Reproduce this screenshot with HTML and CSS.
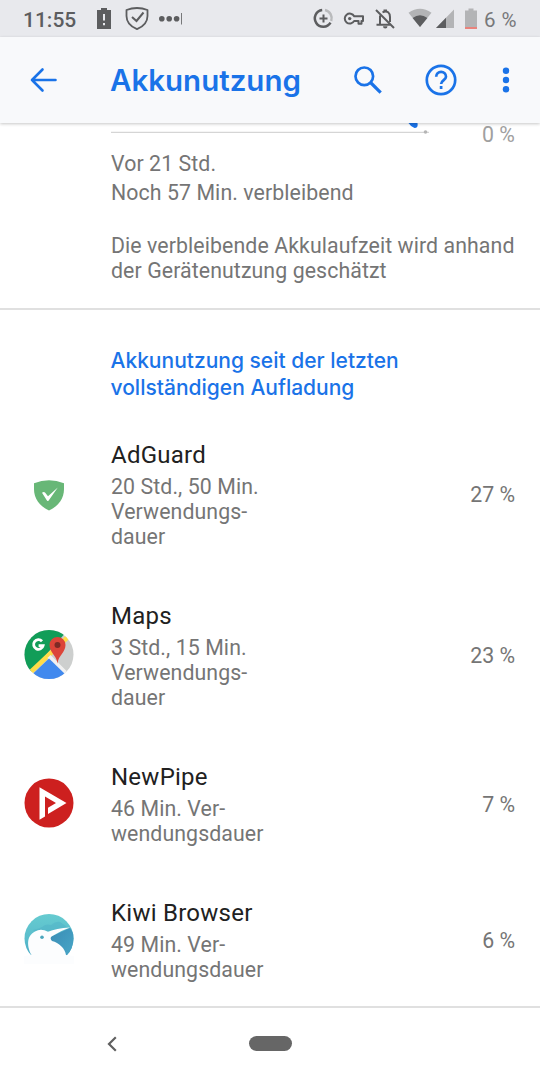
FILE: index.html
```html
<!DOCTYPE html>
<html lang="de">
<head>
  <meta charset="UTF-8">
  <meta name="viewport" content="width=device-width, initial-scale=1.0">
  <title>Akkunutzung</title>
  <link rel="stylesheet" href="styles.css">
</head>
<body>
  <div class="screen">
    <div class="statusbar">
      <span class="clock">11:55</span>
      <svg class="status-left" width="90" height="37" viewBox="94 0 90 37">
        <path fill="#5c5d5f" d="M97 10h4V8h6v2h4v19H97z"/>
        <path stroke="#e8e9ed" stroke-width="2" d="M104 14v6.5M104 23v2.2"/>
        <path fill="none" stroke="#5c5d5f" stroke-width="1.8" stroke-linejoin="round" d="M137 8c4 0 7 .6 10.500 2v6c0 6-4 10.500-10.500 13.200C130.500 26.500 126.500 22 126.500 16v-6c3.500-1.400 6.500-2 10.500-2z"/>
        <path fill="none" stroke="#5c5d5f" stroke-width="2" d="M132 17l4.500 4 7-8.500"/>
        <circle cx="161.800" cy="18.700" r="2.800" fill="#5c5d5f"/>
        <circle cx="169.200" cy="18.700" r="2.800" fill="#5c5d5f"/>
        <circle cx="176.600" cy="18.700" r="2.800" fill="#5c5d5f"/>
        <path stroke="#77787a" d="M181.500 13v11.500"/>
      </svg>
      <svg class="status-right" width="170" height="37" viewBox="311 0 170 37">
        <path fill="none" stroke="#5c5d5f" stroke-width="2.500" d="M322.200 10a8.400 8.400 0 1 0 8.300 12.600"/>
        <path fill="none" stroke="#b9babc" stroke-width="2.500" d="M325 10a8.400 8.400 0 0 1 6.200 11"/>
        <path stroke="#5c5d5f" stroke-width="2" d="M323.500 14.500v8M319.500 18.500h8"/>
        <path fill="none" stroke="#5c5d5f" stroke-width="2" stroke-linejoin="round" d="M354.200 16.300a5 5 0 1 0 0 4.600h4.300v2.800h3v-2.800h1.500v-4.600z"/>
        <circle cx="349.700" cy="18.600" r="1.700" fill="#5c5d5f"/>
        <path fill="none" stroke="#5c5d5f" stroke-width="2" d="M380 15.500v9M376.500 24.700h14M382.500 12.300c5-2.500 7.500.7 7.500 4.700v5M376 10l18 18"/>
        <path fill="#5c5d5f" d="M383.500 9.500h3.500v2h-3.500zM383 26.200h4.500a2.200 2.200 0 0 1-4.500 0z"/>
        <path fill="#b3b4b6" d="M408.500 12.800Q420 4.800 431.500 12.800L420 27z"/>
        <path fill="#5c5d5f" d="M412.600 18Q420 12.500 427.400 18L420 27z"/>
        <path fill="#b3b4b6" d="M436 28L454 9.500V28z"/>
        <path fill="#5c5d5f" d="M436 28l10-10.300V28z"/>
        <path fill="#b3b4b6" d="M465 10.500h3.500v-2h5v2h3.500v18h-12z"/>
        <path fill="#e9837c" d="M465 27h12v2h-12z"/>
      </svg>
      <span class="battery-level">6 %</span>
    </div>

    <header class="toolbar">
      <svg class="back" width="30" height="30" viewBox="0 0 30 30" fill="none" stroke="#1a73e8" stroke-width="2.600" stroke-linecap="round" stroke-linejoin="round">
        <path d="M27.500 15H4M14.500 4.500L4 15l10.500 10.500"/>
      </svg>
      <h1>Akkunutzung</h1>
      <svg class="search" width="30" height="30" viewBox="0 0 30 30" fill="none" stroke="#1a73e8">
        <circle cx="11.300" cy="11.300" r="8.800" stroke-width="2.700"/>
        <path stroke-width="3.200" d="M17.500 17.500l10.200 10.200"/>
      </svg>
      <svg class="help" width="32" height="32" viewBox="0 0 32 32" fill="none" stroke="#1a73e8" stroke-width="2.700">
        <circle cx="16" cy="16" r="14.200"/>
        <path d="M11.200 12.700a4.900 4.900 0 0 1 9.800 0c0 3.300-4.900 3.600-4.900 7.400M16.100 22v3"/>
      </svg>
      <svg class="more" width="8" height="26" viewBox="0 0 8 26" fill="#1a73e8">
        <circle cx="4" cy="3.700" r="3.200"/>
        <circle cx="4" cy="13" r="3.200"/>
        <circle cx="4" cy="22.300" r="3.200"/>
      </svg>
    </header>

    <main class="content">
      <section class="graph">
        <div class="graph-row">
          <svg width="320" height="11" viewBox="111 123 320 11">
            <path stroke="#d5d5d5" stroke-width="1.300" d="M111 132.300H429"/>
            <path fill="#1a73e8" d="M408.500 123H417.500Q418.500 128 414.500 128Q411 127 408.500 123z"/>
            <circle cx="425.500" cy="132" r="1.800" fill="#b5b5b5"/>
          </svg>
          <span class="graph-label">0 %</span>
        </div>
        <p class="graph-text">Vor 21 Std.<br>Noch 57 Min. verbleibend</p>
        <p class="estimate">Die verbleibende Akkulaufzeit wird anhand<br>der Gerätenutzung geschätzt</p>
      </section>

      <section class="usage">
        <h2>Akkunutzung seit der letzten<br>vollständigen Aufladung</h2>

        <div class="app">
          <svg class="app-icon" width="50" height="50" viewBox="24 469 50 50">
            <path fill="#68b777" d="M34 483.200Q49 477.500 64 483.200V489C64 499 58 506.500 49 510.500C40 506.500 34 499 34 489z"/>
            <path fill="#fff" d="M42 492.800q1.800-1.400 3-.3l3 3.800 9.800-8.800-9.300 13.300q-.7.600-1.400 0z"/>
          </svg>
          <div class="app-text">
            <h3>AdGuard</h3>
            <p>20 Std., 50 Min.<br>Verwendungs-<br>dauer</p>
          </div>
          <span class="percent">27 %</span>
        </div>

        <div class="app">
          <svg class="app-icon" width="50" height="50" viewBox="0 0 50 50">
            <clipPath id="mapClip"><circle cx="25" cy="24.500" r="24.500"/></clipPath>
            <g clip-path="url(#mapClip)">
              <path fill="#cdcfce" d="M0 0h50v50H0z"/>
              <path fill="#119d58" d="M0 0h44L5 44H0z"/>
              <path stroke="#ffdc48" stroke-width="4.600" d="M4 44.500L46 5"/>
              <path stroke="#f1f1f1" stroke-width="4.500" d="M25 26.500l20 20"/>
              <path fill="#4189ee" d="M25 28.500L43 46v4H4v-1.500z"/>
            </g>
            <path fill="none" stroke="#fff" stroke-width="2.800" d="M18 11.300a4.800 4.800 0 1 0 1.100 4.300h-4.500"/>
            <path fill="#dc4539" d="M33.500 33.500C32.500 25 25.500 22.500 25.500 15a8 8 0 0 1 16 0c0 7.500-7 10-8 18.500z"/>
            <circle cx="33.500" cy="15" r="3" fill="#7d2a25"/>
          </svg>
          <div class="app-text">
            <h3>Maps</h3>
            <p>3 Std., 15 Min.<br>Verwendungs-<br>dauer</p>
          </div>
          <span class="percent">23 %</span>
        </div>

        <div class="app">
          <svg class="app-icon" width="50" height="50" viewBox="0 0 50 50">
            <circle cx="25" cy="25" r="24.500" fill="#cd201f"/>
            <path fill="#fff" d="M15.500 9.200L42.500 25 24 36v-6.200l8-4.800-11-6.500v20l-5.500 3.200z"/>
          </svg>
          <div class="app-text">
            <h3>NewPipe</h3>
            <p>46 Min. Ver-<br>wendungsdauer</p>
          </div>
          <span class="percent">7 %</span>
        </div>

        <div class="app">
          <svg class="app-icon" width="50" height="50" viewBox="0 0 50 50">
            <defs>
              <linearGradient id="kiwiSky" x1="0" y1="0" x2="0" y2="1">
                <stop offset="0" stop-color="#66cbd0"/>
                <stop offset=".5" stop-color="#5abdcc"/>
                <stop offset="1" stop-color="#3f9fc0"/>
              </linearGradient>
              <linearGradient id="kiwiBeak" x1="0" y1="0" x2="1" y2="1">
                <stop offset="0" stop-color="#398bb4"/>
                <stop offset="1" stop-color="#49a7c8"/>
              </linearGradient>
              <clipPath id="kiwiClip"><circle cx="25" cy="24.500" r="24.500"/></clipPath>
            </defs>
            <g clip-path="url(#kiwiClip)">
              <path fill="url(#kiwiSky)" d="M0 0h50v50H0z"/>
              <path fill="#4eafc5" opacity=".45" d="M9 16Q16 15 21 11q3-1 6 0 5-4 9-3 5 3 9 7L20 24z"/>
              <path fill="url(#kiwiBeak)" d="M26 23L46 14l4 6v22l-8 1-17-18z"/>
            </g>
            <path fill="#fcfdfe" d="M0 50V42l7.500-1C3 33 2 22 11 17.500q6-3.500 13 .3Q32 14.300 46 13.500q-9 3-18.500 9-2 2 .5 4.500c7 1.500 13 7.500 14 14l8 1v8z"/>
            <circle cx="18" cy="23.300" r="1.800" fill="#4ba6bd"/>
          </svg>
          <div class="app-text">
            <h3>Kiwi Browser</h3>
            <p>49 Min. Ver-<br>wendungsdauer</p>
          </div>
          <span class="percent">6 %</span>
        </div>
      </section>
    </main>

    <nav class="navbar">
      <svg class="nav-back" width="12" height="18" viewBox="0 0 12 18" fill="none" stroke="#606060" stroke-width="2.200">
        <path d="M9.800 2.300L3 9l6.800 6.700"/>
      </svg>
      <div class="home-pill"></div>
    </nav>
  </div>
</body>
</html>
```

FILE: styles.css
```css
* {
  box-sizing: border-box;
}
body {
  margin: 0;
  font-family: Roboto, sans-serif;
  background-color: #fff;
}
h1, h2, h3, p {
  margin: 0;
}
svg {
  display: block;
  flex-shrink: 0;
}
.screen {
  display: flex;
  flex-direction: column;
  width: 540px;
  height: 1080px;
  overflow: hidden;
}

/* status bar */
.statusbar {
  display: flex;
  align-items: center;
  flex-shrink: 0;
  height: 37px;
  padding-left: 23px;
  background-color: #e8e9ed;
  color: #5c5d5f;
}
.clock {
  width: 71px;
  padding-top: 3px;
  font-size: 21px;
  font-weight: 500;
  white-space: nowrap;
}
.status-right {
  margin-left: 127px;
}
.battery-level {
  padding: 3px 0 0 3px;
  font-size: 20.5px;
  letter-spacing: 0.5px;
  color: #77787a;
  white-space: nowrap;
}

/* app bar */
.toolbar {
  display: flex;
  align-items: center;
  flex-shrink: 0;
  height: 86px;
  padding-left: 28px;
  background-color: #f8f9fb;
  box-shadow: 0 1px 3px rgba(0, 0, 0, 0.22);
  z-index: 1;
}
.toolbar h1 {
  width: 243px;
  margin-left: 52px;
  font-family: Inter, sans-serif;
  font-size: 29.5px;
  font-weight: 600;
  line-height: 36px;
  color: #1a73e8;
}
.help {
  margin-left: 42px;
}
.more {
  margin-left: 45px;
}

/* battery graph */
.content {
  flex: 1;
  min-height: 0;
  overflow: hidden;
}
.graph {
  height: 187px;
  padding-left: 111px;
  border-bottom: 2px solid #e0e0e0;
  font-size: 21.3px;
  letter-spacing: 0.09px;
  color: #757575;
}
.graph-row {
  display: flex;
  justify-content: space-between;
  height: 26px;
  padding-right: 25px;
}
.graph-label {
  margin-top: -1px;
  line-height: 25px;
  color: #a0a0a0;
}
.graph-text {
  line-height: 29px;
}
.estimate {
  margin-top: 26px;
  line-height: 25px;
  white-space: nowrap;
}

/* app list */
.usage h2 {
  height: 104px;
  padding: 37px 0 0 110.5px;
  font-family: Inter, sans-serif;
  font-size: 21px;
  font-weight: 500;
  line-height: 27px;
  color: #1a73e8;
  white-space: nowrap;
}
.app {
  display: flex;
  align-items: center;
  padding: 27px 25px 27px 24px;
}
.app-icon {
  margin-bottom: 2px;
}
.app-text {
  flex: 1;
  margin-left: 37px;
}
.app-text h3 {
  margin-bottom: 5px;
  font-size: 24px;
  font-weight: 400;
  letter-spacing: 0.25px;
  line-height: 28px;
  color: #212121;
}
.app-text p {
  margin-bottom: -1px;
  font-size: 21.3px;
  letter-spacing: 0.09px;
  line-height: 25px;
  color: #757575;
}
.percent {
  font-size: 21.3px;
  color: #757575;
}

/* navigation bar */
.navbar {
  display: flex;
  align-items: center;
  flex-shrink: 0;
  height: 74px;
  padding: 0 0 1px 106px;
  border-top: 2px solid #e0e0e0;
  background-color: #fff;
}
.home-pill {
  width: 43px;
  height: 15px;
  margin-left: 131px;
  border-radius: 8px;
  background-color: #666;
}
```
